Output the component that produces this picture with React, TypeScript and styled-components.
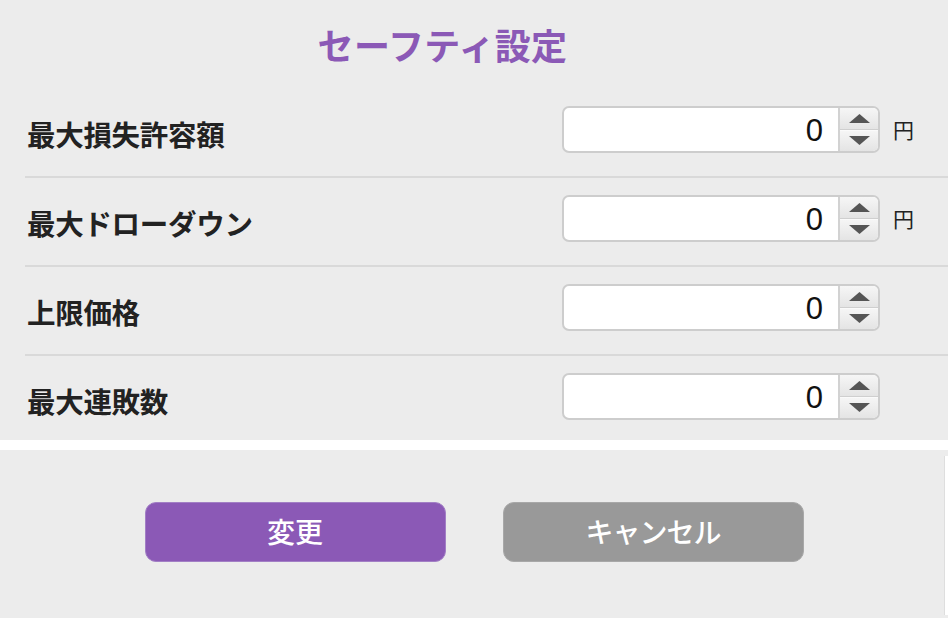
import React from "react";
import styled, { createGlobalStyle } from "styled-components";

const GlobalStyle = createGlobalStyle`
  html, body { margin: 0; padding: 0; background: #ececec; }
  body { font-family: "Noto Sans CJK JP", "Noto Sans", sans-serif; overflow: hidden; }
`;

const Page = styled.div`
  width: 948px;
  height: 618px;
  display: flex;
  flex-direction: column;
  background: #ececec;
`;

const TopSection = styled.section`
  height: 440px;
  display: flex;
  flex-direction: column;
`;

const Title = styled.h1`
  margin: 0;
  height: 89px;
  flex: none;
  padding-right: 63px;
  padding-bottom: 2px;
  box-sizing: border-box;
  display: flex;
  align-items: center;
  justify-content: center;
  font-size: 36px;
  font-weight: 700;
  color: #8b59b6;
  font-family: "Noto Sans CJK JP", sans-serif;
  letter-spacing: 0.3px;
`;

const Row = styled.div<{ $last?: boolean }>`
  margin-left: 25px;
  flex: none;
  height: ${(p) => (p.$last ? "84px" : "89px")};
  display: flex;
  align-items: flex-start;
  padding: 17px 0 0 2px;
  box-sizing: border-box;
  border-bottom: ${(p) => (p.$last ? "none" : "2px solid #d9d9d9")};
`;

const Label = styled.div`
  flex: 1;
  height: 47px;
  display: flex;
  align-items: center;
  padding-top: 8px;
  box-sizing: border-box;
  font-size: 28.5px;
  font-weight: 700;
  color: #222;
  letter-spacing: -0.3px;
`;

const NumberBox = styled.div`
  width: 318px;
  height: 47px;
  box-sizing: border-box;
  display: flex;
  border: 2px solid #cdcdcd;
  border-radius: 7px;
  background: #fff;
  overflow: hidden;
`;

const Value = styled.div`
  flex: 1;
  display: flex;
  align-items: center;
  justify-content: flex-end;
  padding-right: 15px;
  font-family: "Liberation Sans", Arial, sans-serif;
  font-size: 31px;
  color: #111;
  padding-top: 2px;
`;

const Spinner = styled.div`
  width: 38px;
  display: flex;
  flex-direction: column;
  border-left: 2px solid #d2d2d2;
`;

const SpinButton = styled.div<{ $down?: boolean }>`
  flex: 1;
  display: flex;
  align-items: center;
  justify-content: center;
  background: linear-gradient(#f6f6f6, #e4e4e4);
  border-top: ${(p) => (p.$down ? "1px solid #cfcfcf" : "none")};
  box-shadow: ${(p) => (p.$down ? "inset 0 1px 0 #fafafa" : "none")};
`;

const Unit = styled.div`
  width: 68px;
  height: 47px;
  display: flex;
  align-items: center;
  box-sizing: border-box;
  padding-left: 13px;
  padding-bottom: 2px;
  font-size: 21px;
  color: #222;
`;

const WhiteGap = styled.div`
  height: 10px;
  background: #fff;
`;

const Footer = styled.footer`
  flex: 1;
  display: flex;
`;

const ButtonArea = styled.div`
  flex: 1;
  display: flex;
  justify-content: center;
  align-items: flex-start;
  gap: 57px;
  padding-top: 52px;
  padding-left: 4px;
`;

const EdgeStrip = styled.div`
  width: 3px;
  margin: 6px 0 3px;
  background: #fff;
  border-left: 1px solid #dedede;
`;

const ActionButton = styled.button<{ $primary?: boolean }>`
  width: 301px;
  height: 60px;
  box-sizing: border-box;
  border-radius: 11px;
  border: 1px solid ${(p) => (p.$primary ? "#a27fc5" : "#a8a8a8")};
  background: ${(p) => (p.$primary ? "#8b59b6" : "#999999")};
  color: #fff;
  font-family: "Noto Sans CJK JP", sans-serif;
  font-size: 28px;
  font-weight: 500;
  letter-spacing: ${(p) => (p.$primary ? "0" : "-1px")};
  padding: 0 0 2px;
  cursor: pointer;
`;

const Up = () => (
  <svg width="21" height="9" viewBox="0 0 21 9">
    <polygon points="10.5,0 21,9 0,9" fill="#555" />
  </svg>
);
const Down = () => (
  <svg width="21" height="9" viewBox="0 0 21 9">
    <polygon points="0,0 21,0 10.5,9" fill="#555" />
  </svg>
);

const rows: { label: string; unit?: string }[] = [
  { label: "最大損失許容額", unit: "円" },
  { label: "最大ドローダウン", unit: "円" },
  { label: "上限価格" },
  { label: "最大連敗数" },
];

export default function App() {
  return (
    <Page>
      <GlobalStyle />
      <TopSection>
        <Title>セーフティ設定</Title>
        {rows.map((r, i) => (
          <Row key={r.label} $last={i === rows.length - 1}>
            <Label>{r.label}</Label>
            <NumberBox>
              <Value>0</Value>
              <Spinner>
                <SpinButton>
                  <Up />
                </SpinButton>
                <SpinButton $down>
                  <Down />
                </SpinButton>
              </Spinner>
            </NumberBox>
            <Unit>{r.unit ?? ""}</Unit>
          </Row>
        ))}
      </TopSection>
      <WhiteGap />
      <Footer>
        <ButtonArea>
          <ActionButton $primary>変更</ActionButton>
          <ActionButton>キャンセル</ActionButton>
        </ButtonArea>
        <EdgeStrip />
      </Footer>
    </Page>
  );
}
